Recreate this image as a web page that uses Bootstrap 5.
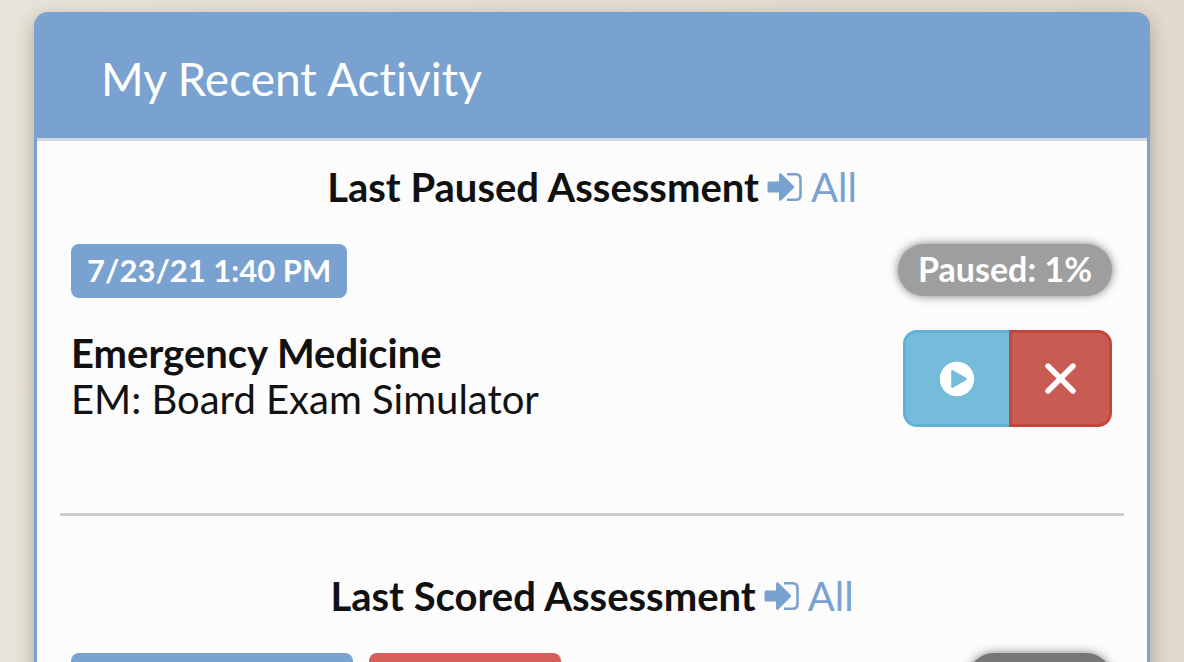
<!DOCTYPE html>
<html lang="en">
<head>
<meta charset="utf-8">
<meta name="viewport" content="width=device-width, initial-scale=1">
<title>My Recent Activity</title>
<link href="https://cdn.jsdelivr.net/npm/bootstrap@5.3.0/dist/css/bootstrap.min.css" rel="stylesheet">
<style>
  :root { --brand: #7aa2d1; }
  body {
    font-family: Lato, sans-serif;
    font-size: 40px;
    line-height: 46px;
    font-variant-ligatures: none;
    color: #111;
    background: linear-gradient(100deg, #e9e4da, #e2d9cd);
    min-height: 100vh;
    padding: 12px 34px 0;
    overflow-x: hidden;
  }
  .activity {
    --bs-card-border-width: 3px;
    --bs-card-border-color: var(--brand);
    --bs-card-border-radius: 14px;
    --bs-card-bg: #fcfcfc;
    color: #111;
    box-shadow: 0 6px 20px rgba(70, 55, 30, .35);
  }
  .activity-head {
    background: var(--brand);
    border-bottom: 3px solid #d6d7df;
    border-radius: 9px 9px 0 0;
    color: #fff;
    padding: 37px 64px 32px;
  }
  .activity-head h1 { font-size: 46px; line-height: 54px; font-weight: 400; margin: 0; }
  .activity-body { padding: 23px 23px 24px; }
  .section-title { font-size: 40px; line-height: 46px; font-weight: 700; margin: 0 0 34px; gap: 8px; }
  .section-title a { color: var(--brand); font-weight: 400; gap: 8px; }
  .entry { padding: 0 12px 0 11px; }
  .tag {
    background: var(--brand);
    color: #fff;
    font-size: 31px;
    line-height: 36px;
    font-weight: 700;
    border-radius: 8px;
    padding: 8px 16px 10px;
    min-height: 54px;
  }
  .tag-wide { min-width: 282px; }
  .tag-result { min-width: 192px; background: #d65f5c; }
  .state {
    background: #9e9e9e;
    color: #fff;
    font-size: 34px;
    line-height: 38px;
    font-weight: 700;
    border-radius: 26px;
    padding: 6px 20px 8px;
    min-height: 52px;
    box-shadow: 0 0 10px rgba(0, 0, 0, .5);
  }
  .state-scored { min-width: 144px; background: #777; }
  .entry-main { margin-top: 32px; }
  .act { height: 97px; border: 3px solid; border-radius: 14px; color: #fff; }
  .act-play { width: 106px; background: #75bbda; border-color: #62b2d6; border-right: 0; }
  .act-drop { width: 103px; background: #c85b54; border-color: #c4463e; }
  .rule { height: 3px; background: #ccc; border: 0; opacity: 1; margin: 86px 0 57px; }
</style>
</head>
<body>
<svg class="d-none" xmlns="http://www.w3.org/2000/svg">
  <symbol id="goto" viewBox="0 0 36 30">
    <path d="M2 9.500h10V3c0-2 1.500-2.200 2.500-1.200l12.300 12.200q1 1 0 2L14.500 28.200c-1 1-2.500.8-2.500-1.200v-6.500H2q-1.500 0-1.500-1.500v-8Q.5 9.500 2 9.500z" fill="currentColor"/>
    <path d="M20 2.200h8.500q5 0 5 5v15.600q0 5-5 5H20" fill="none" stroke="currentColor" stroke-width="2.600"/>
  </symbol>
</svg>
<main class="card activity">
  <header class="activity-head"><h1>My Recent Activity</h1></header>
  <div class="activity-body">
    <section>
      <h2 class="section-title d-flex justify-content-center align-items-center">Last Paused Assessment
        <a href="#" class="d-flex align-items-center text-decoration-none"><svg width="36" height="30" aria-hidden="true"><use href="#goto"/></svg>All</a>
      </h2>
      <div class="entry">
        <div class="d-flex justify-content-between align-items-start">
          <span class="tag">7/23/21 1:40 PM</span>
          <span class="state">Paused: 1%</span>
        </div>
        <div class="entry-main d-flex justify-content-between align-items-start">
          <div><strong>Emergency Medicine</strong><br>EM: Board Exam Simulator</div>
          <div class="d-flex" role="group" aria-label="Assessment actions">
            <button type="button" class="act act-play rounded-end-0 p-0 d-flex align-items-center justify-content-center" aria-label="Resume">
              <svg width="36" height="36" viewBox="0 0 36 36" aria-hidden="true"><path fill="currentColor" fill-rule="evenodd" d="M17 .8a17.200 17.200 0 1 0 0 34.400a17.200 17.200 0 0 0 0-34.400zM11.200 10.200q0-2 1.800-1l13 7.600q1.700 1.200 0 2.400l-13 7.600q-1.800 1-1.800-1z"/></svg>
            </button>
            <button type="button" class="act act-drop rounded-start-0 p-0 d-flex align-items-center justify-content-center" aria-label="Discard">
              <svg width="32" height="32" viewBox="0 0 32 32" aria-hidden="true"><path d="M3 3l25 25M28 3l-25 25" stroke="currentColor" stroke-width="5.400" stroke-linecap="round"/></svg>
            </button>
          </div>
        </div>
      </div>
    </section>
    <hr class="rule">
    <section>
      <h2 class="section-title d-flex justify-content-center align-items-center">Last Scored Assessment
        <a href="#" class="d-flex align-items-center text-decoration-none"><svg width="36" height="30" aria-hidden="true"><use href="#goto"/></svg>All</a>
      </h2>
      <div class="entry d-flex align-items-start gap-3">
        <span class="tag tag-wide"></span>
        <span class="tag tag-result"></span>
        <span class="state state-scored ms-auto"></span>
      </div>
    </section>
  </div>
</main>
<script src="https://cdn.jsdelivr.net/npm/bootstrap@5.3.0/dist/js/bootstrap.bundle.min.js"></script>
</body>
</html>
